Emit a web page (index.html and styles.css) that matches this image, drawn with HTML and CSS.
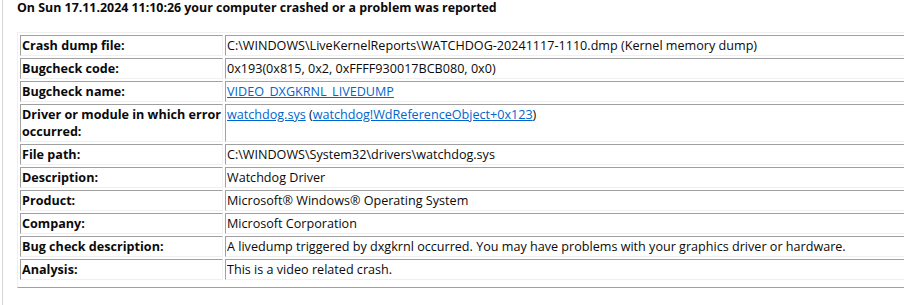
FILE: index.html
```html
<!DOCTYPE html>
<html lang="en">
<head>
    <meta charset="UTF-8">
    <title>Crash report</title>
    <link rel="stylesheet" href="styles.css">
</head>
<body>

<div class="report">
    <h3 class="report-title">On Sun 17.11.2024 11:10:26 your computer crashed or a problem was reported</h3>

    <table class="details">
        <tr>
            <td class="label">Crash dump file:</td>
            <td>C:\WINDOWS\LiveKernelReports\WATCHDOG-20241117-1110.dmp (Kernel memory dump)</td>
        </tr>
        <tr>
            <td class="label">Bugcheck code:</td>
            <td>0x193(0x815, 0x2, 0xFFFF930017BCB080, 0x0)</td>
        </tr>
        <tr>
            <td class="label">Bugcheck name:</td>
            <td><a href="#">VIDEO_DXGKRNL_LIVEDUMP</a></td>
        </tr>
        <tr>
            <td class="label">Driver or module in which error occurred:</td>
            <td><a href="#">watchdog.sys</a> (<a href="#">watchdog!WdReferenceObject+0x123</a>)</td>
        </tr>
        <tr>
            <td class="label">File path:</td>
            <td>C:\WINDOWS\System32\drivers\watchdog.sys</td>
        </tr>
        <tr>
            <td class="label">Description:</td>
            <td>Watchdog Driver</td>
        </tr>
        <tr>
            <td class="label">Product:</td>
            <td>Microsoft® Windows® Operating System</td>
        </tr>
        <tr>
            <td class="label">Company:</td>
            <td>Microsoft Corporation</td>
        </tr>
        <tr>
            <td class="label">Bug check description:</td>
            <td>A livedump triggered by dxgkrnl occurred. You may have problems with your graphics driver or hardware.</td>
        </tr>
        <tr>
            <td class="label">Analysis:</td>
            <td>This is a video related crash.</td>
        </tr>
    </table>
</div>

</body>
</html>
```

FILE: styles.css
```css
body, html {
    margin: 0;
    padding: 0;
    background: #fff;
    overflow: hidden;
}

body {
    font-family: 'Open Sans', sans-serif;
    font-size: 12.6px;
    color: #0a0a0a;
}

.report {
    margin-left: 2px;
    border-left: 1px solid #d4d4d4;
    padding-left: 14px;
    height: 305px;
}

.report-title {
    margin: 0;
    font-size: 12.4px;
    line-height: 16px;
    font-weight: bold;
    white-space: nowrap;
}

.details {
    margin-top: 16px;
    width: 1100px;
    border-collapse: separate;
    border-spacing: 2px;
    border: 1px solid;
    border-color: #f0f0f0 #a0a0a0 #a0a0a0 #f0f0f0;
    padding-bottom: 5px;
}

.details td {
    border: 1px solid;
    border-color: #a0a0a0 #f0f0f0 #f0f0f0 #a0a0a0;
    padding: 1px 2px 1px 1px;
    line-height: 17px;
    vertical-align: top;
    white-space: nowrap;
}

.details td.label {
    width: 199px;
    padding-right: 1px;
    font-weight: bold;
    white-space: normal;
}

.details a {
    color: #0066cc;
}
```
